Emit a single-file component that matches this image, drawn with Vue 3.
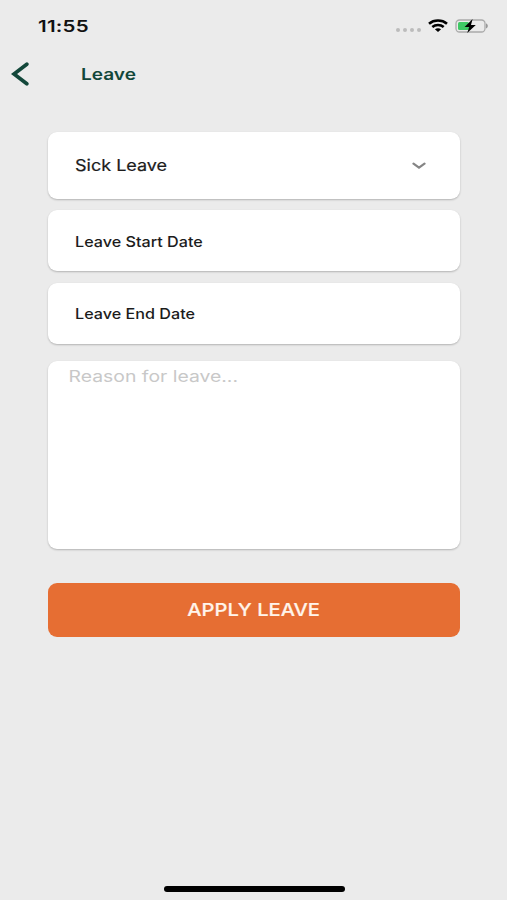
<template>
  <div class="leave-page">
    <div class="status-bar">
      <span class="time"><span class="wide">11:55</span></span>
      <div class="status-icons">
        <div class="signal">
          <i v-for="n in 4" :key="n"></i>
        </div>
        <svg class="wifi" width="20" height="14" viewBox="0 0 20 14">
          <path d="M1 4.7C6 .5 14 .5 19 4.7" />
          <path d="M4.3 8c3.2-2.7 8.2-2.7 11.4 0" />
          <path class="wifi-dot" d="M6.9 10.3c1.8-1.5 4.4-1.5 6.2 0L10 13z" />
        </svg>
        <svg class="battery" width="34" height="16" viewBox="0 0 34 16">
          <rect class="shell" x="1" y="2" width="29" height="12" rx="3.5" />
          <rect class="level" x="3" y="4" width="11" height="8" rx="1.5" />
          <path class="tip" d="M31 5.6c2.4.6 2.4 4.2 0 4.8z" />
          <path class="bolt" d="M17.6 1L9.6 8.9h4.6L12.2 15 20.8 7.1h-4.8z" />
        </svg>
      </div>
    </div>

    <div class="nav-bar">
      <button class="back" aria-label="Back" @click="goBack">
        <svg width="20" height="26" viewBox="0 0 20 26">
          <path d="M15.8 3.2L3 13l12.8 9.8" />
        </svg>
      </button>
      <h1 class="title"><span class="wide">Leave</span></h1>
    </div>

    <form class="leave-form" @submit.prevent>
      <div class="field select" @click="nextType">
        <span class="wide">{{ leaveType }}</span>
        <svg class="chevron" width="14" height="8" viewBox="0 0 14 8">
          <path d="M1.5 1.7L7 5.7l5.5-4" />
        </svg>
      </div>
      <div v-for="label in dateFields" :key="label" class="field date">
        <span class="wide">{{ label }}</span>
      </div>
      <div class="reason">
        <textarea v-model="reason" placeholder="Reason for leave..."></textarea>
      </div>
      <button class="submit" type="submit">
        <span class="wide">APPLY LEAVE</span>
      </button>
    </form>

    <div class="home-indicator"></div>
  </div>
</template>

<script setup>
import { ref } from "vue";

const leaveTypes = ["Sick Leave", "Casual Leave", "Annual Leave"];
const leaveType = ref(leaveTypes[0]);
const dateFields = ["Leave Start Date", "Leave End Date"];
const reason = ref("");

const nextType = () => {
  const index = leaveTypes.indexOf(leaveType.value);
  leaveType.value = leaveTypes[(index + 1) % leaveTypes.length];
};

const goBack = () => {
  window.history.back();
};
</script>

<style>
body {
  margin: 0;
  background: #ebebeb;
}
</style>

<style scoped>
.leave-page {
  display: flex;
  flex-direction: column;
  box-sizing: border-box;
  height: 900px;
  background: #ebebeb;
  font-family: Inter, "Liberation Sans", sans-serif;
  color: #1c1c1c;
}

button {
  padding: 0;
  border: none;
  background: none;
  font-family: inherit;
}

.wide {
  display: inline-block;
  transform: scaleX(1.15);
  transform-origin: left center;
  white-space: nowrap;
}

/* status bar */
.status-bar {
  display: flex;
  align-items: center;
  justify-content: space-between;
  height: 52px;
  padding: 0 18px 0 38px;
}

.time {
  font-size: 16px;
  font-weight: 600;
  letter-spacing: 0.2px;
  color: #111;
}

.time .wide {
  transform: scaleX(1.28);
}

.status-icons {
  display: flex;
  align-items: center;
}

.signal {
  display: flex;
  gap: 3px;
  margin: 8px 7px 0 0;
}

.signal i {
  width: 4px;
  height: 4px;
  border-radius: 50%;
  background: #bcbcbc;
}

.wifi {
  margin-right: 7px;
  fill: none;
  stroke: #000;
  stroke-width: 2.6;
}

.wifi .wifi-dot {
  fill: #000;
  stroke: none;
}

.shell {
  fill: none;
  stroke: #aaa;
  stroke-width: 1.3;
}

.level {
  fill: #3fc865;
}

.tip {
  fill: #999;
}

.bolt {
  fill: #000;
}

/* header */
.nav-bar {
  display: flex;
  align-items: center;
  height: 44px;
  padding-left: 11px;
}

.back {
  width: 20px;
  height: 26px;
  margin-right: 50px;
}

.back svg {
  display: block;
  fill: none;
  stroke: #12473a;
  stroke-width: 3.7;
  stroke-linecap: round;
}

.title {
  margin: 0;
  font-size: 16px;
  font-weight: 600;
  line-height: 20px;
  color: #12473a;
}

.title .wide {
  transform: scaleX(1.19);
}

/* form */
.leave-form {
  display: flex;
  flex-direction: column;
  padding: 36px 47px 0 48px;
}

.field,
.reason {
  border-radius: 9px;
  background: #fff;
  box-shadow: 0 1px 2px rgba(0, 0, 0, 0.24);
}

.field {
  display: flex;
  align-items: center;
  padding: 0 27px;
}

.select {
  justify-content: space-between;
  height: 67px;
  padding-right: 34px;
  font-size: 16px;
  cursor: pointer;
}

.select .wide {
  padding-bottom: 2px;
  transform: scaleX(1.125);
  -webkit-text-stroke: 0.2px currentColor;
}

.chevron {
  fill: none;
  stroke: #858585;
  stroke-width: 2.2;
  stroke-linecap: round;
}

.date {
  height: 61px;
  margin-top: 11.4px;
  font-size: 14.5px;
  font-weight: 500;
}

.date .wide {
  padding-top: 1px;
  transform: scaleX(1.115);
}

.reason {
  height: 188px;
  margin-top: 17.2px;
  overflow: hidden;
}

.reason textarea {
  display: block;
  box-sizing: border-box;
  width: 340px;
  height: 188px;
  padding: 5px 17px;
  border: none;
  outline: none;
  resize: none;
  background: transparent;
  font-family: inherit;
  font-size: 16px;
  line-height: 21px;
  transform: scaleX(1.21);
  transform-origin: left top;
}

.reason textarea::placeholder {
  color: #c8c8c8;
}

.submit {
  height: 54px;
  margin-top: 34px;
  border-radius: 9px;
  background: #e66e33;
  font-size: 17.5px;
  font-weight: 500;
  color: #fff4ea;
}

.submit .wide {
  transform-origin: center;
  -webkit-text-stroke: 0.2px currentColor;
}

.home-indicator {
  width: 181px;
  height: 6px;
  margin: auto auto 8px 164px;
  border-radius: 3px;
  background: #000;
}
</style>
